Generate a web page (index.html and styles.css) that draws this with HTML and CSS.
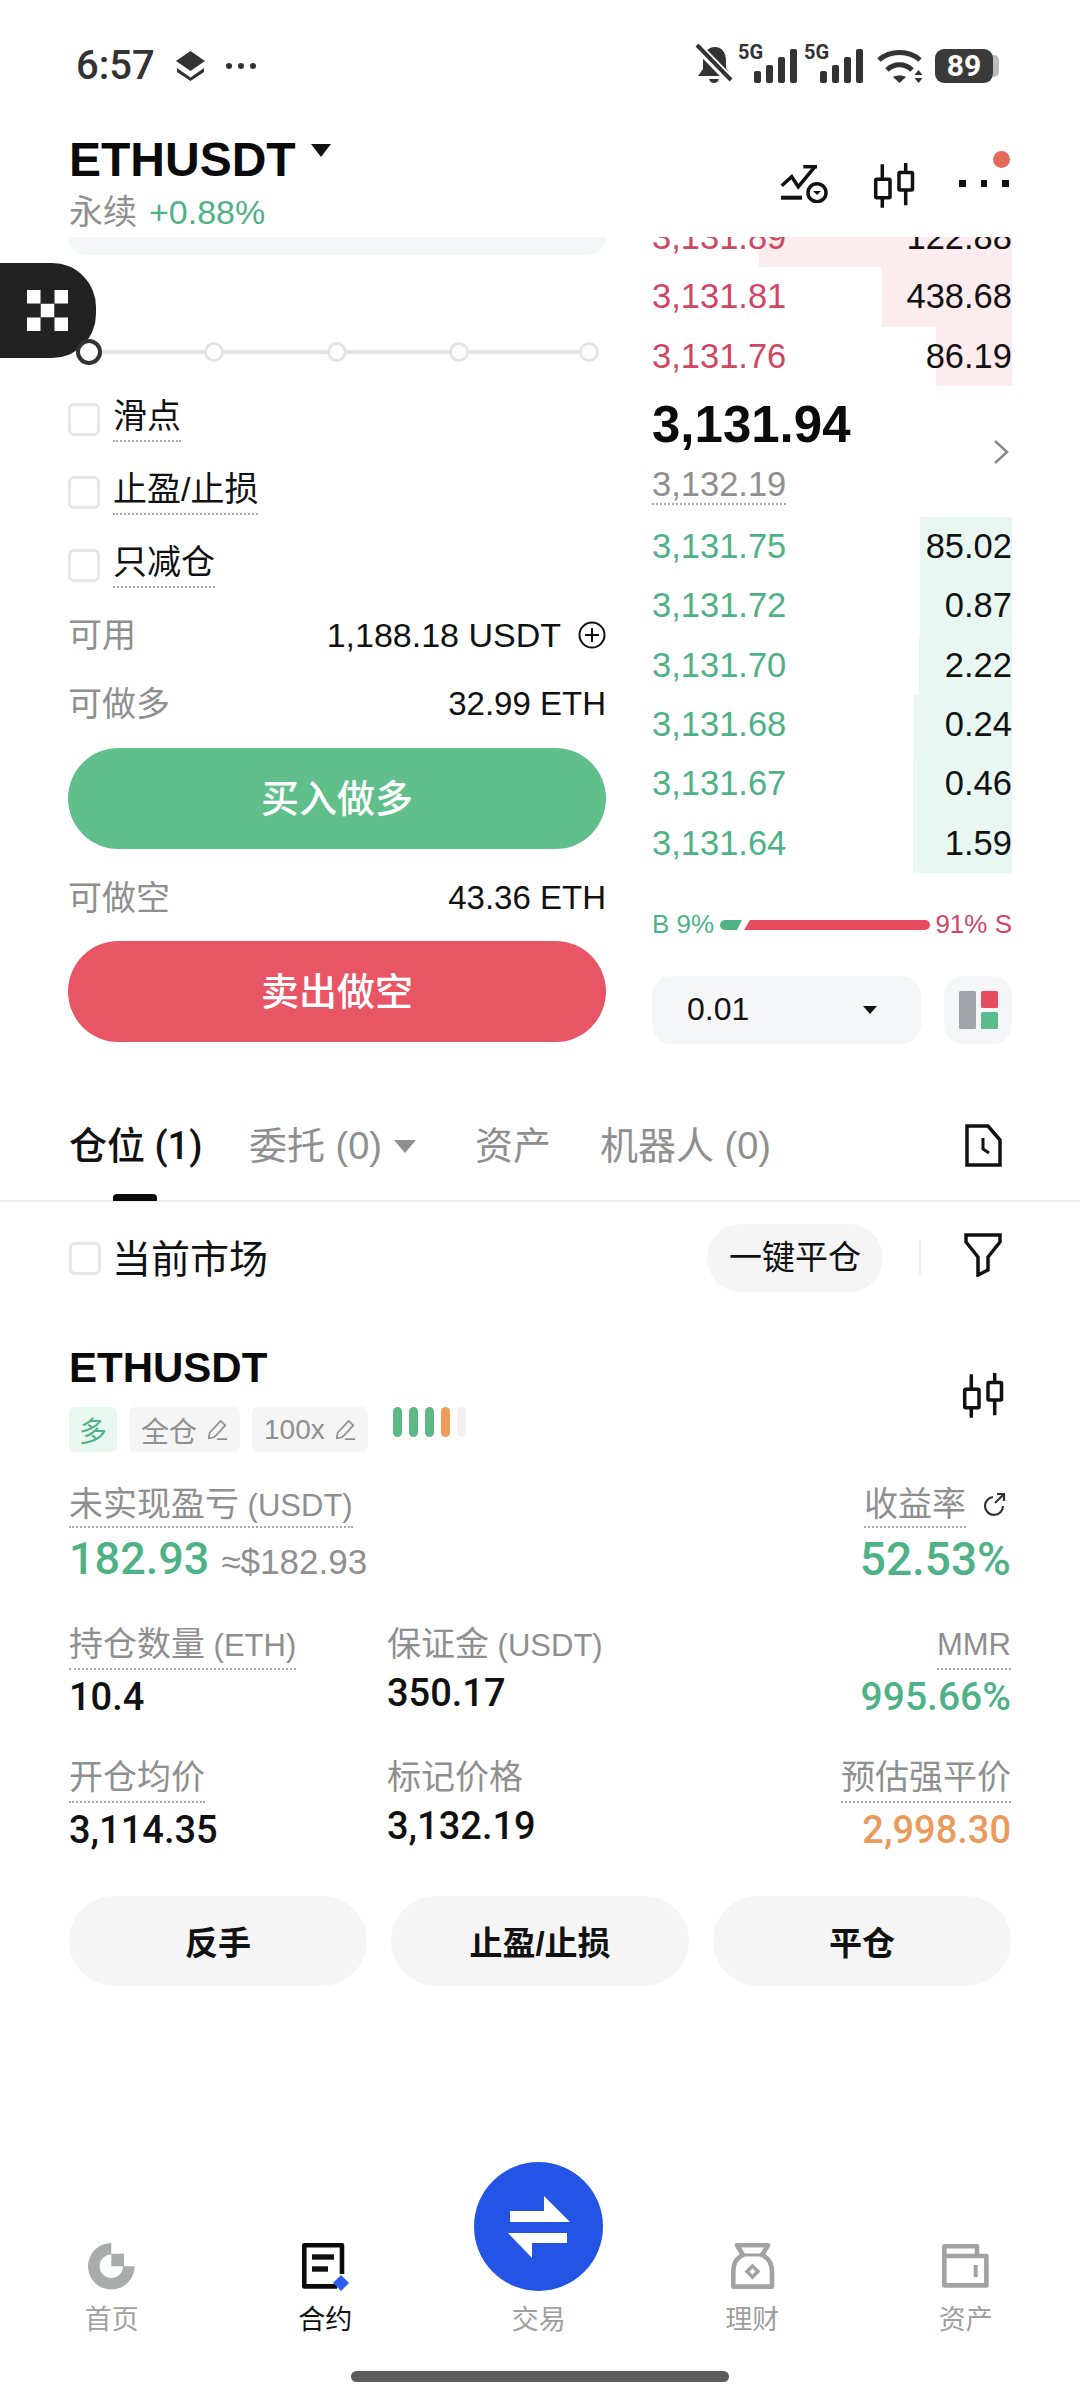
FILE: index.html
```html
<!DOCTYPE html>
<html lang="zh-CN">
<head>
<meta charset="utf-8">
<title>ETHUSDT</title>
<link rel="stylesheet" href="styles.css">
</head>
<body>
<div class="page">
  <header class="status">
    <div class="status-left">
      <span class="clock">6:57</span>
      <svg class="ic-layers" viewBox="0 0 31 30"><path d="M15.5 0 30 10 15.5 20 1 10Z" fill="#333"/><path d="M2 17l13.500 9.500L29 17v4L15.500 30 2 21Z" fill="#333"/></svg>
      <span class="status-dots"><i></i><i></i><i></i></span>
    </div>
    <div class="status-right">
      <svg class="ic-bell" viewBox="0 0 38 40"><path d="M20 3c7 0 11 6 11 13v8l5 8H3l5-7v-9C8 9 13 3 20 3Z" fill="#333"/><path d="M14 35h10c-1 3-3 4-5 4s-4-1-5-4Z" fill="#333"/><path d="M1 1 36 37" stroke="#fff" stroke-width="9"/><path d="M2 1 36 36" stroke="#333" stroke-width="4"/></svg>
      <span class="sim"><b>5G</b><svg viewBox="0 0 43 34"><g fill="#333"><rect y="22" width="7" height="12" rx="2"/><rect x="12" y="16" width="7" height="18" rx="2"/><rect x="24" y="8" width="7" height="26" rx="2"/><rect x="36" width="7" height="34" rx="2"/></g></svg></span>
      <span class="sim"><b>5G</b><svg viewBox="0 0 43 34"><g fill="#333"><rect y="22" width="7" height="12" rx="2"/><rect x="12" y="16" width="7" height="18" rx="2"/><rect x="24" y="8" width="7" height="26" rx="2"/><rect x="36" width="7" height="34" rx="2"/></g></svg></span>
      <svg class="ic-wifi" viewBox="0 0 47 33"><g fill="none" stroke="#333" stroke-width="5"><path d="M2 10C13 0 32 0 43 10"/><path d="M10 20C17 13 28 13 35 20"/></g><path d="M16 27C19 25 26 25 29 27L22.500 33Z" fill="#333"/><path d="M41.500 20l4 5h-8ZM41.500 33l4-5h-8Z" fill="#333"/></svg>
      <span class="battery"><span class="battery-body">89</span><i class="battery-nub"></i></span>
    </div>
  </header>

  <section class="market">
    <div class="market-title">
      <div class="symbol-row"><h1 class="symbol">ETHUSDT</h1><i class="caret caret-title"></i></div>
      <div class="market-sub"><span class="muted">永续</span><span class="up">+0.88%</span></div>
    </div>
    <div class="market-tools">
      <svg class="ic-alert" viewBox="0 0 49 40"><g fill="none" stroke="#111" stroke-width="3.500"><path d="M2 34.700H23" stroke-width="4"/><path d="M2.700 22.700 12.700 13.700 19.300 23.700 36 3.700"/><path d="M24.300 3.700H38"/><circle cx="38" cy="29.700" r="9"/></g><path d="M34 28h8l-4 4Z" fill="#111"/></svg>
      <svg class="ic-candle" viewBox="0 0 43 45"><g fill="none" stroke="#111" stroke-width="3.500"><rect x="2.700" y="16.300" width="14.300" height="18.400" rx="1"/><rect x="26" y="9.500" width="13.500" height="17.500" rx="1"/><path d="M9.300 1.300V16M9.300 35V44.700M32.700 0V9M32.700 27V42.300"/></g></svg>
      <span class="more"><i></i><i></i><i></i><em class="more-badge"></em></span>
    </div>
  </section>

  <section class="trade">
    <div class="order-form">
      <div class="input-remnant"></div>
      <div class="slider">
        <i class="knob knob-on"></i><i class="knob"></i><i class="knob"></i><i class="knob"></i><i class="knob knob-last"></i>
      </div>
      <div class="options">
        <label class="option"><i class="check"></i><span class="dotted">滑点</span></label>
        <label class="option"><i class="check"></i><span class="dotted">止盈/止损</span></label>
        <label class="option"><i class="check"></i><span class="dotted">只减仓</span></label>
      </div>
      <div class="line line-avail"><span class="muted">可用</span><span class="line-val">1,188.18 USDT<svg class="ic-plus" viewBox="0 0 28 28"><circle cx="14" cy="14" r="12.500" fill="none" stroke="#111" stroke-width="2"/><path d="M14 7v14M7 14h14" stroke="#111" stroke-width="2"/></svg></span></div>
      <div class="line line-long"><span class="muted">可做多</span><span class="line-val">32.99 ETH</span></div>
      <button class="cta cta-buy">买入做多</button>
      <div class="line line-short"><span class="muted">可做空</span><span class="line-val">43.36 ETH</span></div>
      <button class="cta cta-sell">卖出做空</button>
    </div>

    <div class="book">
      <div class="asks">
        <div class="book-row"><i class="depth depth-ask" style="width:253px"></i><span class="px-ask">3,131.89</span><span>122.88</span></div>
        <div class="book-row"><i class="depth depth-ask" style="width:130px"></i><span class="px-ask">3,131.81</span><span>438.68</span></div>
        <div class="book-row"><i class="depth depth-ask" style="width:76px"></i><span class="px-ask">3,131.76</span><span>86.19</span></div>
      </div>
      <div class="mid">
        <div>
          <div class="last">3,131.94</div>
          <div class="mark"><span class="dotted">3,132.19</span></div>
        </div>
        <svg class="ic-chev" viewBox="0 0 16 26"><path d="M2 2l12 11L2 24" fill="none" stroke="#8a8a8a" stroke-width="2.500"/></svg>
      </div>
      <div class="bids">
        <div class="book-row"><i class="depth depth-bid" style="width:92px"></i><span class="px-bid">3,131.75</span><span>85.02</span></div>
        <div class="book-row"><i class="depth depth-bid" style="width:92px"></i><span class="px-bid">3,131.72</span><span>0.87</span></div>
        <div class="book-row"><i class="depth depth-bid" style="width:93px"></i><span class="px-bid">3,131.70</span><span>2.22</span></div>
        <div class="book-row"><i class="depth depth-bid" style="width:98px"></i><span class="px-bid">3,131.68</span><span>0.24</span></div>
        <div class="book-row"><i class="depth depth-bid" style="width:99px"></i><span class="px-bid">3,131.67</span><span>0.46</span></div>
        <div class="book-row"><i class="depth depth-bid" style="width:99px"></i><span class="px-bid">3,131.64</span><span>1.59</span></div>
      </div>
      <div class="ratio">
        <span class="up">B 9%</span>
        <svg class="ratio-bar" viewBox="0 0 210 12"><path d="M5 1h17l-5 10H5a5 5 0 0 1 0-10Z" fill="#4fb286"/><path d="M30 1h175a5 5 0 0 1 0 10H24Z" fill="#e74c60"/></svg>
        <span class="down">91% S</span>
      </div>
      <div class="book-ctrl">
        <div class="tick"><span>0.01</span><i class="caret caret-tick"></i></div>
        <div class="layout-btn"><svg viewBox="0 0 39 38"><rect width="17" height="38" rx="1.500" fill="#a0a3a8"/><rect x="22" width="17" height="17" rx="1.500" fill="#e74c60"/><rect x="22" y="21" width="17" height="17" rx="1.500" fill="#5cbb8a"/></svg></div>
      </div>
    </div>
  </section>

  <nav class="tabs">
    <span class="tab tab-on">仓位 (1)</span>
    <span class="tab tab-orders">委托 (0)<i class="caret caret-grey"></i></span>
    <span class="tab tab-assets">资产</span>
    <span class="tab tab-bots">机器人 (0)</span>
    <svg class="ic-history" viewBox="0 0 37 43"><path d="M2 2h21l12 14v25H2Z" fill="none" stroke="#111" stroke-width="3.500"/><path d="M18 14v11l6 4" fill="none" stroke="#111" stroke-width="3"/></svg>
  </nav>

  <section class="filter-row">
    <label class="option-market"><i class="check"></i><span class="market-label">当前市场</span></label>
    <span class="close-all">一键平仓</span>
    <i class="divider"></i>
    <svg class="ic-filter" viewBox="0 0 38 44"><path d="M2 2h34v7L24 24v13l-10 5V24L2 9Z" fill="none" stroke="#111" stroke-width="3.500"/></svg>
  </section>

  <section class="position">
    <div class="pos-head">
      <div>
        <h2 class="pos-symbol">ETHUSDT</h2>
        <div class="tags">
          <span class="tag tag-long">多</span>
          <span class="tag">全仓<svg class="ic-pencil" viewBox="0 0 24 24"><path d="M16 2l5 5L9 20l-6 1 1-6Z M12 22h11" fill="none" stroke="#8f8f8f" stroke-width="1.800"/></svg></span>
          <span class="tag">100x<svg class="ic-pencil" viewBox="0 0 24 24"><path d="M16 2l5 5L9 20l-6 1 1-6Z M12 22h11" fill="none" stroke="#8f8f8f" stroke-width="1.800"/></svg></span>
          <span class="adl"><i class="adl-g"></i><i class="adl-g"></i><i class="adl-g"></i><i class="adl-o"></i><i class="adl-e"></i></span>
        </div>
      </div>
      <svg class="ic-candle ic-candle-pos" viewBox="0 0 43 45"><g fill="none" stroke="#111" stroke-width="3.500"><rect x="2.700" y="16.300" width="14.300" height="18.400" rx="1"/><rect x="26" y="9.500" width="13.500" height="17.500" rx="1"/><path d="M9.300 1.300V16M9.300 35V44.700M32.700 0V9M32.700 27V42.300"/></g></svg>
    </div>

    <div class="stats">
      <div class="stat stat-wide">
        <span class="stat-label"><span class="dotted">未实现盈亏<span class="unit"> (USDT)</span></span></span>
        <div class="stat-big"><span class="up">182.93</span><small>≈$182.93</small></div>
      </div>
      <div class="stat stat-end stat-right">
        <span class="stat-label"><span class="dotted">收益率</span><svg class="ic-share" viewBox="0 0 26 26"><path d="M12 5a9 9 0 1 0 10 9" fill="none" stroke="#333" stroke-width="2.200"/><path d="M14 11l9-9M16 2h7v7" fill="none" stroke="#333" stroke-width="2.200"/></svg></span>
        <div class="stat-big"><span class="up">52.53%</span></div>
      </div>

      <div class="stat">
        <span class="stat-label"><span class="dotted">持仓数量<span class="unit"> (ETH)</span></span></span>
        <div class="stat-val">10.4</div>
      </div>
      <div class="stat stat-plain">
        <span class="stat-label"><span>保证金<span class="unit"> (USDT)</span></span></span>
        <div class="stat-val">350.17</div>
      </div>
      <div class="stat stat-end">
        <span class="stat-label"><span class="dotted unit">MMR</span></span>
        <div class="stat-val stat-val-up">995.66%</div>
      </div>

      <div class="stat">
        <span class="stat-label"><span class="dotted">开仓均价</span></span>
        <div class="stat-val">3,114.35</div>
      </div>
      <div class="stat stat-plain">
        <span class="stat-label">标记价格</span>
        <div class="stat-val">3,132.19</div>
      </div>
      <div class="stat stat-end">
        <span class="stat-label"><span class="dotted">预估强平价</span></span>
        <div class="stat-val stat-val-warn">2,998.30</div>
      </div>
    </div>

    <div class="actions">
      <button class="action">反手</button>
      <button class="action">止盈/止损</button>
      <button class="action">平仓</button>
    </div>
  </section>

  <footer class="footer">
    <div class="bottom-nav">
      <div class="nav-item">
        <svg class="nav-ic" viewBox="0 0 47 46"><path d="M23.300 0A23.300 23.300 0 1 0 46.600 23.300H35A11.700 11.700 0 1 1 23.300 11.600Z" fill="#a9abad"/><rect x="23.300" y="10.700" width="12.700" height="12.600" fill="#a9abad"/></svg>
        <span>首页</span>
      </div>
      <div class="nav-item nav-on">
        <svg class="nav-ic" viewBox="0 0 47 46"><path d="M35 43.400H2.300V2.300H40V31" fill="#fff" stroke="#0a0a0a" stroke-width="4.600" stroke-linejoin="round"/><rect x="10" y="11.300" width="22" height="5.400" fill="#111"/><rect x="10" y="23.300" width="16" height="5.400" fill="#111"/><path d="M39 32.500 46.500 40 39 47.500 31.500 40Z" fill="#2a5cf0" stroke="#2a5cf0" stroke-linejoin="round"/></svg>
        <span>合约</span>
      </div>
      <div class="nav-item">
        <span class="swap"><svg viewBox="0 0 129 129"><path d="M36 49h34V34l26 26H36ZM93 71v10H58v15L34 71Z" fill="#fff"/></svg></span>
        <span>交易</span>
      </div>
      <div class="nav-item">
        <svg class="nav-ic" viewBox="0 0 43 46"><path d="M6 2.300H37L31 12C38 15 41 22 41 29V43.600H2.300V29C2.300 22 5 15 12 12Z" fill="none" stroke="#a2a2a2" stroke-width="4.600" stroke-linejoin="round"/><path d="M12 12H31" stroke="#a2a2a2" stroke-width="3"/><path d="M21.500 23 27 28.500 21.500 34 16 28.500Z" fill="none" stroke="#a2a2a2" stroke-width="3.500"/></svg>
        <span>理财</span>
      </div>
      <div class="nav-item">
        <svg class="nav-ic" viewBox="0 0 47 46"><path d="M2.300 13V3.300H35V13M2.300 13H44.400V42.400H2.300Z" fill="none" stroke="#a2a2a2" stroke-width="4.600" stroke-linejoin="round"/><rect x="31.700" y="22" width="4" height="12" fill="#a2a2a2"/></svg>
        <span>资产</span>
      </div>
    </div>
    <div class="home-bar"></div>
  </footer>

  <div class="logo-tab"><svg viewBox="0 0 41 41"><g fill="#fff"><rect width="13.500" height="13.500"/><rect x="27.500" width="13.500" height="13.500"/><rect x="13.750" y="13.750" width="13.500" height="13.500"/><rect y="27.500" width="13.500" height="13.500"/><rect x="27.500" y="27.500" width="13.500" height="13.500"/></g></svg></div>
</div>
</body>
</html>
```

FILE: styles.css
```css
* { box-sizing: border-box; margin: 0; padding: 0; }
html, body { background: #fff; }
body { font-family: "Liberation Sans", "Noto Sans CJK SC", sans-serif; color: #111; }
i, em { display: block; font-style: normal; }
button { border: 0; font: inherit; }

.page { position: relative; width: 1080px; height: 2400px; overflow: hidden; display: flex; flex-direction: column; background: #fff; }

.muted { color: #8f8f8f; }
.up { color: #4fb286; }
.down { color: #cf4762; }
.dotted { border-bottom: 2px dotted #a8a8a8; }

.caret { width: 0; height: 0; border-left: 8px solid transparent; border-right: 8px solid transparent; border-top: 10px solid #111; }

/* status bar */
.status { height: 128px; flex: none; display: flex; justify-content: space-between; align-items: center; padding: 3px 81px 0 76px; color: #333; }
.status-left { display: flex; align-items: center; }
.clock { font: 500 40px/1 Roboto, sans-serif; color: #333; }
.ic-layers { width: 31px; height: 30px; margin-left: 20px; }
.status-dots { display: flex; gap: 6px; margin-left: 20px; }
.status-dots i { width: 6px; height: 6px; border-radius: 50%; background: #333; }
.status-right { display: flex; align-items: flex-end; height: 40px; margin-top: -3px; }
.ic-bell { width: 38px; height: 40px; }
.sim { position: relative; width: 59px; height: 40px; margin-left: 5px; display: block; }
.sim + .sim { margin-left: 7px; }
.sim b { position: absolute; left: 0; top: -2px; font: 700 20px/1 Roboto, sans-serif; color: #333; }
.sim svg { position: absolute; right: 0; bottom: 1px; width: 43px; height: 34px; }
.ic-wifi { width: 47px; height: 33px; margin: 0 0 1px 14px; }
.battery { display: flex; align-items: center; margin: 0 0 1px 11px; }
.battery-body { width: 58px; height: 34px; border-radius: 9px; background: #3a3a3a; color: #fff; font: 700 30px/34px Roboto, sans-serif; text-align: center; }
.battery-nub { width: 6px; height: 22px; background: #bcbcbc; border-radius: 0 5px 5px 0; }

/* market header */
.market { height: 109px; flex: none; display: flex; justify-content: space-between; padding: 8px 71px 0 69px; }
.symbol-row { display: flex; align-items: flex-start; height: 48px; }
.symbol { font-size: 48px; line-height: 48px; font-weight: 700; color: #0a0a0a; }
.caret-title { margin: 8px 0 0 15px; border-left-width: 10px; border-right-width: 10px; border-top-width: 13px; }
.market-sub { display: flex; gap: 12px; font-size: 34px; line-height: 40px; margin-top: 8px; }
.market-tools { position: relative; display: flex; align-items: center; height: 98px; }
.ic-alert { width: 49px; height: 40px; margin-top: -4px; }
.ic-candle { width: 43px; height: 45px; margin-left: 45px; }
.more { position: relative; display: flex; gap: 15px; margin: -3px 0 0 43px; width: 50px; }
.more i { width: 6.500px; height: 6.500px; background: #111; }
.more .more-badge { position: absolute; right: -1px; top: -29px; width: 17px; height: 17px; border-radius: 50%; background: #e5695c; }

/* trade */
.trade { height: 820px; flex: none; display: flex; gap: 46px; padding: 0 68px; overflow: hidden; }
.order-form { width: 538px; flex: none; }
.input-remnant { height: 18px; background: #f5f6f7; border-radius: 0 0 18px 18px; }
.slider { position: relative; z-index: 2; margin: 84px 7px 0 8px; height: 26px; display: flex; justify-content: space-between; align-items: center; background: linear-gradient(#e3e3e3, #e3e3e3) center / 100% 4px no-repeat; }
.knob { width: 20px; height: 20px; border-radius: 50%; background: #fff; border: 3px solid #e3e3e3; }
.knob-on { width: 26px; height: 26px; border: 4px solid #333; }
.knob-last { margin-left: 8px; }
.options { margin-top: 33px; display: flex; flex-direction: column; gap: 29px; }
.option { display: flex; height: 44px; font-size: 34px; line-height: 37px; color: #111; }
.check { flex: none; width: 32px; height: 33px; border: 3px solid #e6e6e6; border-radius: 6px; background: #fff; }
.option .check { margin: 5px 13px 0 0; }
.option .dotted { display: block; height: 44px; }
.line { height: 44px; display: flex; justify-content: space-between; align-items: center; font-size: 34px; }
.line .muted { padding-bottom: 6px; }
.line-avail { margin-top: 25px; }
.line-long { margin-top: 25px; }
.line-short { margin-top: 27px; }
.line-val { display: flex; align-items: center; font-size: 33px; color: #111; }
.line-avail .line-val { font-size: 34px; }
.ic-plus { width: 28px; height: 28px; margin-left: 17px; }
.cta { display: block; width: 100%; height: 101px; border-radius: 51px; color: #fff; font-size: 38px; font-weight: 500; line-height: 98px; }
.cta-buy { margin-top: 22px; background: #60bf8a; }
.cta-sell { margin-top: 21px; background: #e85665; }

/* order book */
.book { width: 360px; flex: none; font-size: 34.500px; }
.asks { margin-top: -29px; }
.book-row { position: relative; height: 59.300px; display: flex; justify-content: space-between; align-items: center; color: #111; }
.book-row span { position: relative; }
.depth { position: absolute; right: 0; top: 0; bottom: 0; }
.depth-ask { background: #fcecee; }
.depth-bid { background: #e9f7f2; }
.px-ask { color: #cf4762; }
.px-bid { color: #4fb286; }
.mid { height: 131px; display: flex; justify-content: space-between; align-items: flex-start; padding-right: 3px; }
.last { font-size: 51px; line-height: 58px; font-weight: 700; color: #0a0a0a; margin-top: 10px; }
.mark { font-size: 34.500px; line-height: 38px; margin-top: 11px; color: #8f8f8f; }
.ic-chev { width: 16px; height: 26px; margin-top: 53px; }
.bids { height: 356px; }
.ratio { height: 30px; margin-top: 37px; display: flex; justify-content: space-between; align-items: center; font-size: 26px; white-space: nowrap; }
.ratio-bar { width: 210px; height: 12px; }
.book-ctrl { display: flex; justify-content: space-between; margin-top: 36px; }
.tick { width: 269px; height: 68px; padding: 0 44px 0 35px; border-radius: 20px; background: #f5f6f7; display: flex; justify-content: space-between; align-items: center; font-size: 32px; }
.caret-tick { border-left-width: 7px; border-right-width: 7px; border-top-width: 8px; }
.layout-btn { width: 68px; height: 68px; border-radius: 20px; background: #f5f6f7; display: flex; align-items: center; justify-content: center; }
.layout-btn svg { width: 39px; height: 38px; }

/* tabs */
.tabs { flex: none; height: 145px; padding: 65px 78px 0 69px; border-bottom: 2px solid #efefef; display: flex; align-items: flex-start; position: relative; }
.tab { font-size: 38px; line-height: 48px; color: #8f8f8f; white-space: nowrap; display: flex; align-items: center; }
.tab-on { color: #111; width: 180px; font-family: Roboto, "Noto Sans CJK SC", sans-serif; font-weight: 500; }
.tab-on::after { content: ""; position: absolute; left: 113px; bottom: -1px; width: 44px; height: 7px; border-radius: 4px 4px 0 0; background: #0a0a0a; }
.tab-orders { width: 226px; }
.caret-grey { margin-left: 12px; border-left-width: 11px; border-right-width: 11px; border-top-width: 13px; border-top-color: #8f8f8f; }
.tab-assets { width: 125px; }
.tab-bots { flex: 1; }
.ic-history { width: 37px; height: 43px; margin-top: 2px; }

.filter-row { flex: none; height: 112px; padding: 0 78px 0 69px; display: flex; align-items: center; }
.option-market { display: flex; align-items: center; gap: 11px; font-size: 39px; color: #111; flex: 1; }
.market-label { position: relative; top: -2px; }
.close-all { width: 176px; height: 68px; border-radius: 34px; background: #f5f5f5; color: #111; font-size: 33px; line-height: 68px; text-align: center; }
.divider { width: 2px; height: 34px; margin: 0 43px 0 36px; background: #eee; }
.ic-filter { width: 38px; height: 44px; margin-top: -6px; }

/* position */
.position { flex: none; padding: 29px 69px 0 69px; }
.pos-head { display: flex; justify-content: space-between; align-items: flex-start; }
.pos-symbol { font-size: 42px; line-height: 50px; font-weight: 700; color: #0a0a0a; }
.ic-candle-pos { margin: 30px 6px 0 0; }
.tags { display: flex; gap: 12px; margin-top: 14px; }
.tag { display: flex; align-items: center; justify-content: center; gap: 9px; height: 45px; padding: 0 12px; border-radius: 6px; background: #f5f5f5; color: #8f8f8f; font-size: 28px; }
.tag-long { width: 48px; padding: 0; background: #e8f7f0; color: #4fb286; }
.ic-pencil { width: 22px; height: 22px; }
.adl { display: flex; gap: 7px; margin-left: 13px; }
.adl i { width: 9px; height: 30px; border-radius: 5px; }
.adl-g { background: #5cb885; }
.adl-o { background: #ee9d58; }
.adl-e { background: #f1f1f1; }

.stats { display: grid; grid-template-columns: 318px 1fr auto; row-gap: 37px; margin-top: 31px; }
.stat-wide { grid-column: 1 / span 2; }
.stat-end { grid-column: 3; text-align: right; justify-self: end; }
.stat-label { display: flex; align-items: flex-start; height: 45px; font-size: 34px; line-height: 39px; color: #8f8f8f; white-space: nowrap; }
.stat-wide .stat-label, .stat-right .stat-label { line-height: 43px; }
.unit { font-size: 31px; }
.stat-label .dotted { display: block; height: 45px; }
.stat-end .stat-label { justify-content: flex-end; }
.stat-plain .stat-label { height: 41px; }
.stat-big { display: flex; align-items: baseline; justify-content: flex-end; gap: 12px; height: 54px; margin-top: 6px; font: 500 46px/50px Roboto, sans-serif; }
.stat-wide .stat-big { justify-content: flex-start; font-size: 45px; }
.stat-big small { font: 400 35px/50px "Liberation Sans", sans-serif; color: #8f8f8f; }
.stat-val { margin-top: 3px; font: 500 38px/48px Roboto, sans-serif; color: #111; }
.stat-val-up { font-size: 39px; color: #4fb286; }
.stat-val-warn { font-size: 38px; color: #ea9a5b; }
.ic-share { width: 26px; height: 26px; margin: 9px 4px 0 15px; }
.actions { display: grid; grid-template-columns: repeat(3, 1fr); gap: 24px; margin-top: 42px; }
.action { height: 90px; border-radius: 45px; background: #f5f5f5; color: #111; font-size: 33px; font-weight: 700; }

/* bottom nav */
.footer { margin-top: auto; padding: 0 0 18px; }
.bottom-nav { display: grid; grid-template-columns: repeat(5, 213.500px); padding-left: 5px; align-items: end; }
.nav-item { display: flex; flex-direction: column; align-items: center; font-size: 27px; line-height: 36px; color: #a0a0a0; }
.nav-on { color: #111; }
.nav-ic { width: 47px; height: 46px; margin-bottom: 13px; overflow: visible; }
.swap { width: 129px; height: 129px; margin-bottom: 11px; border-radius: 50%; background: #2354e6; display: block; }
.swap svg { display: block; width: 129px; height: 129px; }
.home-bar { width: 378px; height: 11px; margin: 33px auto 0; border-radius: 6px; background: #5c5c5c; }

.logo-tab { position: absolute; left: 0; top: 263px; z-index: 1; width: 96px; height: 95px; border-radius: 0 44px 44px 0; background: #222; display: flex; align-items: center; padding-left: 27px; }
.logo-tab svg { width: 41px; height: 41px; }
```
